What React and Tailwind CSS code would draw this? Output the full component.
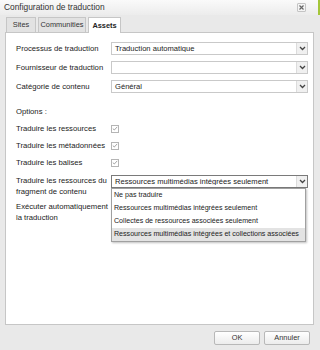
import React from "react";

const font = { fontFamily: '"Liberation Sans", Arial, sans-serif' };

function Chevron() {
  return (
    <svg width="7" height="5" viewBox="0 0 7 5">
      <path d="M1 1 L3.5 3.5 L6 1" stroke="#444" strokeWidth="1.3" fill="none" />
    </svg>
  );
}

function Select({ value, active }) {
  return (
    <div className={`flex h-[13px] items-center border ${active ? "border-[#7a7a7a]" : "border-[#c9c9c9]"} bg-white`}>
      <div className="flex-1 truncate pl-[3px] text-[7.6px] leading-none text-[#222]">{value}</div>
      <div className="flex h-full w-[11px] items-center justify-center border-l border-[#dcdcdc] bg-[#f0f0f0]">
        <Chevron />
      </div>
    </div>
  );
}

function Check() {
  return (
    <div className="flex h-[8px] w-[8px] items-center justify-center border border-[#b5b5b5] bg-white">
      <svg width="6" height="5" viewBox="0 0 6 5">
        <path d="M0.8 2.6 L2.3 4 L5.2 0.9" stroke="#9a9a9a" strokeWidth="0.9" fill="none" />
      </svg>
    </div>
  );
}

export default function App() {
  const label = "w-[95px] shrink-0 text-[7.7px] leading-[11px] text-[#222]";
  return (
    <div className="flex h-[350px] w-[320px] flex-col bg-[#e9e9e9]" style={font}>
      <div className="flex h-[15px] items-center justify-between border-r-2 border-[#a4c639] bg-gradient-to-b from-[#fafafa] to-[#ececec] pl-[4px] pr-[12px]">
        <span className="text-[8.4px] leading-none text-[#333]">Configuration de traduction</span>
        <div className="flex h-[9px] w-[9px] items-center justify-center rounded-[1px] border border-[#c4c4c4] bg-[#f4f4f4]">
          <svg width="5" height="5" viewBox="0 0 5 5">
            <path d="M0.5 0.5 L4.5 4.5 M4.5 0.5 L0.5 4.5" stroke="#666" strokeWidth="1.2" />
          </svg>
        </div>
      </div>
      <div className="flex h-[17px] items-end gap-[2px] pl-[6px] pt-[2px]">
        <div className="flex h-[15px] w-[30px] items-center justify-center border border-b-0 border-[#c6c6c6] bg-[#e2e2e2] text-[7.4px] text-[#333]">Sites</div>
        <div className="flex h-[15px] w-[48px] items-center justify-center border border-b-0 border-[#c6c6c6] bg-[#e2e2e2] text-[7.4px] text-[#333]">Communities</div>
        <div className="relative top-[1px] flex h-[16px] w-[33px] items-center justify-center border border-b-0 border-[#c6c6c6] bg-white text-[7.4px] font-bold text-[#222]">Assets</div>
      </div>
      <div className="mx-[5px] mr-[6px] flex-1 border border-[#c6c6c6] bg-white pl-[10px] pr-[5px] pt-[9px]">
        <div className="flex items-center">
          <div className={label}>Processus de traduction</div>
          <div className="flex-1"><Select value="Traduction automatique" /></div>
        </div>
        <div className="mt-[6px] flex items-center">
          <div className={label}>Fournisseur de traduction</div>
          <div className="flex-1"><Select value="" /></div>
        </div>
        <div className="mt-[6px] flex items-center">
          <div className={label}>Catégorie de contenu</div>
          <div className="flex-1"><Select value="Général" /></div>
        </div>
        <div className="mt-[13px] text-[7.7px] leading-[11px] text-[#222]">Options :</div>
        <div className="mt-[6px] flex items-center">
          <div className={label}>Traduire les ressources</div>
          <Check />
        </div>
        <div className="mt-[6px] flex items-center">
          <div className={label}>Traduire les métadonnées</div>
          <Check />
        </div>
        <div className="mt-[6px] flex items-center">
          <div className={label}>Traduire les balises</div>
          <Check />
        </div>
        <div className="mt-[7px] flex items-start">
          <div className={label}>Traduire les ressources du fragment de contenu</div>
          <div className="relative flex-1">
            <Select value="Ressources multimédias intégrées seulement" active />
            <div className="absolute left-0 right-[2px] top-[13px] z-10 border border-[#a0a0a0] bg-white shadow-[1px_1px_2px_rgba(0,0,0,0.25)]">
              {[
                "Ne pas traduire",
                "Ressources multimédias intégrées seulement",
                "Collectes de ressources associées seulement",
                "Ressources multimédias intégrées et collections associées",
              ].map((o, i) => (
                <div key={o} className={`flex h-[13px] items-center whitespace-nowrap pl-[2px] text-[7.1px] leading-none text-[#222] ${i === 3 ? "bg-[#e3e3e3]" : ""}`}>{o}</div>
              ))}
            </div>
          </div>
        </div>
        <div className="mt-[4px] flex items-start">
          <div className={label}>Exécuter automatiquement la traduction</div>
          <div className="mt-[2px] h-[8px] w-[8px] border border-[#b5b5b5] bg-white" />
        </div>
      </div>
      <div className="flex h-[25px] items-center justify-end gap-[4px] pr-[10px]">
        <div className="flex h-[14px] w-[46px] items-center justify-center rounded-[2px] border border-[#b8b8b8] bg-gradient-to-b from-white to-[#ececec] text-[7.4px] text-[#333]">OK</div>
        <div className="flex h-[14px] w-[46px] items-center justify-center rounded-[2px] border border-[#b8b8b8] bg-gradient-to-b from-white to-[#ececec] text-[7.4px] text-[#333]">Annuler</div>
      </div>
    </div>
  );
}
